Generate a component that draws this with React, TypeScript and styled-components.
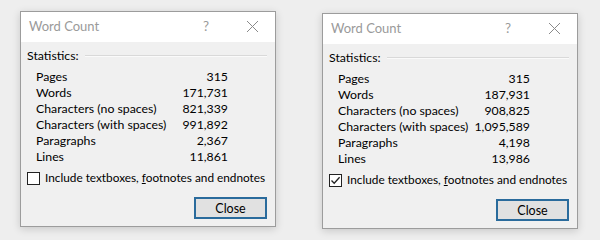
import { type JSX } from 'react';
import styled, { createGlobalStyle } from 'styled-components';

type Stat = {
  readonly label: string;
  readonly value: string;
};

type DialogData = {
  readonly checked: boolean;
  readonly offset: number;
  readonly stats: readonly Stat[];
};

const dialogs: readonly DialogData[] = [
  {
    checked: false,
    offset: 11,
    stats: [
      { label: 'Pages', value: '315' },
      { label: 'Words', value: '171,731' },
      { label: 'Characters (no spaces)', value: '821,339' },
      { label: 'Characters (with spaces)', value: '991,892' },
      { label: 'Paragraphs', value: '2,367' },
      { label: 'Lines', value: '11,861' },
    ],
  },
  {
    checked: true,
    offset: 13,
    stats: [
      { label: 'Pages', value: '315' },
      { label: 'Words', value: '187,931' },
      { label: 'Characters (no spaces)', value: '908,825' },
      { label: 'Characters (with spaces)', value: '1,095,589' },
      { label: 'Paragraphs', value: '4,198' },
      { label: 'Lines', value: '13,986' },
    ],
  },
];

const CloseIcon = () => (
  <svg
    width="13"
    height="13"
    viewBox="0 0 13 13"
  >
    <path
      d="M1 1 L12 12 M12 1 L1 12"
      stroke="#8a8a8a"
      strokeWidth="1"
      fill="none"
    />
  </svg>
);

const CheckMark = () => (
  <svg
    width="11"
    height="11"
    viewBox="0 0 11 11"
  >
    <path
      d="M1.5 5.5 L4.2 8.3 L9.6 2.2"
      stroke="#222"
      strokeWidth="1.3"
      fill="none"
    />
  </svg>
);

const WordCountDialog = ({ checked, offset, stats }: DialogData): JSX.Element => (
  <StyledDialog $offset={offset}>
    <StyledTitleBar>
      <StyledTitle>Word Count</StyledTitle>
      <StyledHelp>?</StyledHelp>
      <StyledCloseX>
        <CloseIcon />
      </StyledCloseX>
    </StyledTitleBar>
    <StyledBody>
      <StyledGroupHead>
        <span>Statistics:</span>
        <StyledRule />
      </StyledGroupHead>
      <StyledStats>
        {stats.map((stat) => (
          <StyledStatRow key={stat.label}>
            <span>{stat.label}</span>
            <StyledValue>{stat.value}</StyledValue>
          </StyledStatRow>
        ))}
      </StyledStats>
      <StyledCheckRow>
        <StyledCheckBox>{checked ? <CheckMark /> : null}</StyledCheckBox>
        <StyledCheckLabel>
          Include textboxes, <u>f</u>ootnotes and endnotes
        </StyledCheckLabel>
      </StyledCheckRow>
      <StyledFooter>
        <StyledButton>Close</StyledButton>
      </StyledFooter>
    </StyledBody>
  </StyledDialog>
);

const App = (): JSX.Element => (
  <>
    <GlobalStyle />
    <StyledPage>
      {dialogs.map((dialog, i) => (
        <WordCountDialog
          key={i}
          {...dialog}
        />
      ))}
    </StyledPage>
  </>
);

export default App;

const GlobalStyle = createGlobalStyle`
  html, body {
    margin: 0;
    padding: 0;
    background: #eeeeee;
  }
  body {
    font-family: Lato, "Noto Sans", sans-serif;
    font-size: 12.3px;
    color: #000;
    white-space: nowrap;
  }
`;

const StyledPage = styled.div`
  display: flex;
  align-items: flex-start;
  gap: 46px;
  width: 600px;
  height: 240px;
  padding-left: 20px;
  box-sizing: border-box;
  overflow: hidden;
`;

const StyledDialog = styled.div<{ $offset: number }>`
  margin-top: ${({ $offset }) => $offset}px;
  width: 256px;
  height: 216px;
  box-sizing: border-box;
  border: 1px solid #9c9c9c;
  background: #f0f0f0;
  box-shadow: 0 2px 8px rgba(0, 0, 0, 0.16);
  display: flex;
  flex-direction: column;
`;

const StyledTitleBar = styled.div`
  height: 30px;
  background: #ffffff;
  display: flex;
  align-items: center;
  padding: 0 0 2px 8px;
  box-sizing: border-box;
  color: #9a9a9a;
`;

const StyledTitle = styled.div`
  flex: 1;
  font-size: 13px;
`;

const StyledHelp = styled.div`
  width: 14px;
  font-size: 13.5px;
  margin-right: 33px;
  text-align: center;
`;

const StyledCloseX = styled.div`
  display: flex;
  margin-right: 16px;
`;

const StyledBody = styled.div`
  flex: 1;
  display: flex;
  flex-direction: column;
  padding: 6px 8px 0 6px;
`;

const StyledGroupHead = styled.div`
  display: flex;
  align-items: center;
  gap: 6px;
  height: 16px;
  line-height: 16px;
`;

const StyledRule = styled.div`
  flex: 1;
  height: 1px;
  background: #d9d9d9;
  border-bottom: 1px solid #fafafa;
`;

const StyledStats = styled.div`
  display: flex;
  flex-direction: column;
  margin-top: 5px;
  padding-left: 9px;
  width: 192px;
`;

const StyledStatRow = styled.div`
  display: flex;
  justify-content: space-between;
  height: 16px;
  line-height: 16px;
`;

const StyledValue = styled.span`
  text-align: right;
`;

const StyledCheckRow = styled.div`
  display: flex;
  align-items: center;
  gap: 5px;
  margin-top: 5px;
  height: 16px;
  line-height: 16px;
`;

const StyledCheckBox = styled.div`
  flex-shrink: 0;
  width: 13px;
  height: 13px;
  box-sizing: border-box;
  border: 1px solid #222;
  background: #fff;
  display: flex;
  align-items: center;
  justify-content: center;
`;

const StyledCheckLabel = styled.span`
  font-size: 11.8px;
`;

const StyledFooter = styled.div`
  display: flex;
  justify-content: flex-end;
  margin-top: 11px;
`;

const StyledButton = styled.button`
  width: 73px;
  height: 22px;
  box-sizing: border-box;
  border: 2px solid #2a6b9c;
  background: #e1e1e1;
  font-family: inherit;
  font-size: 12.5px;
  color: #000;
  padding: 0;
`;
